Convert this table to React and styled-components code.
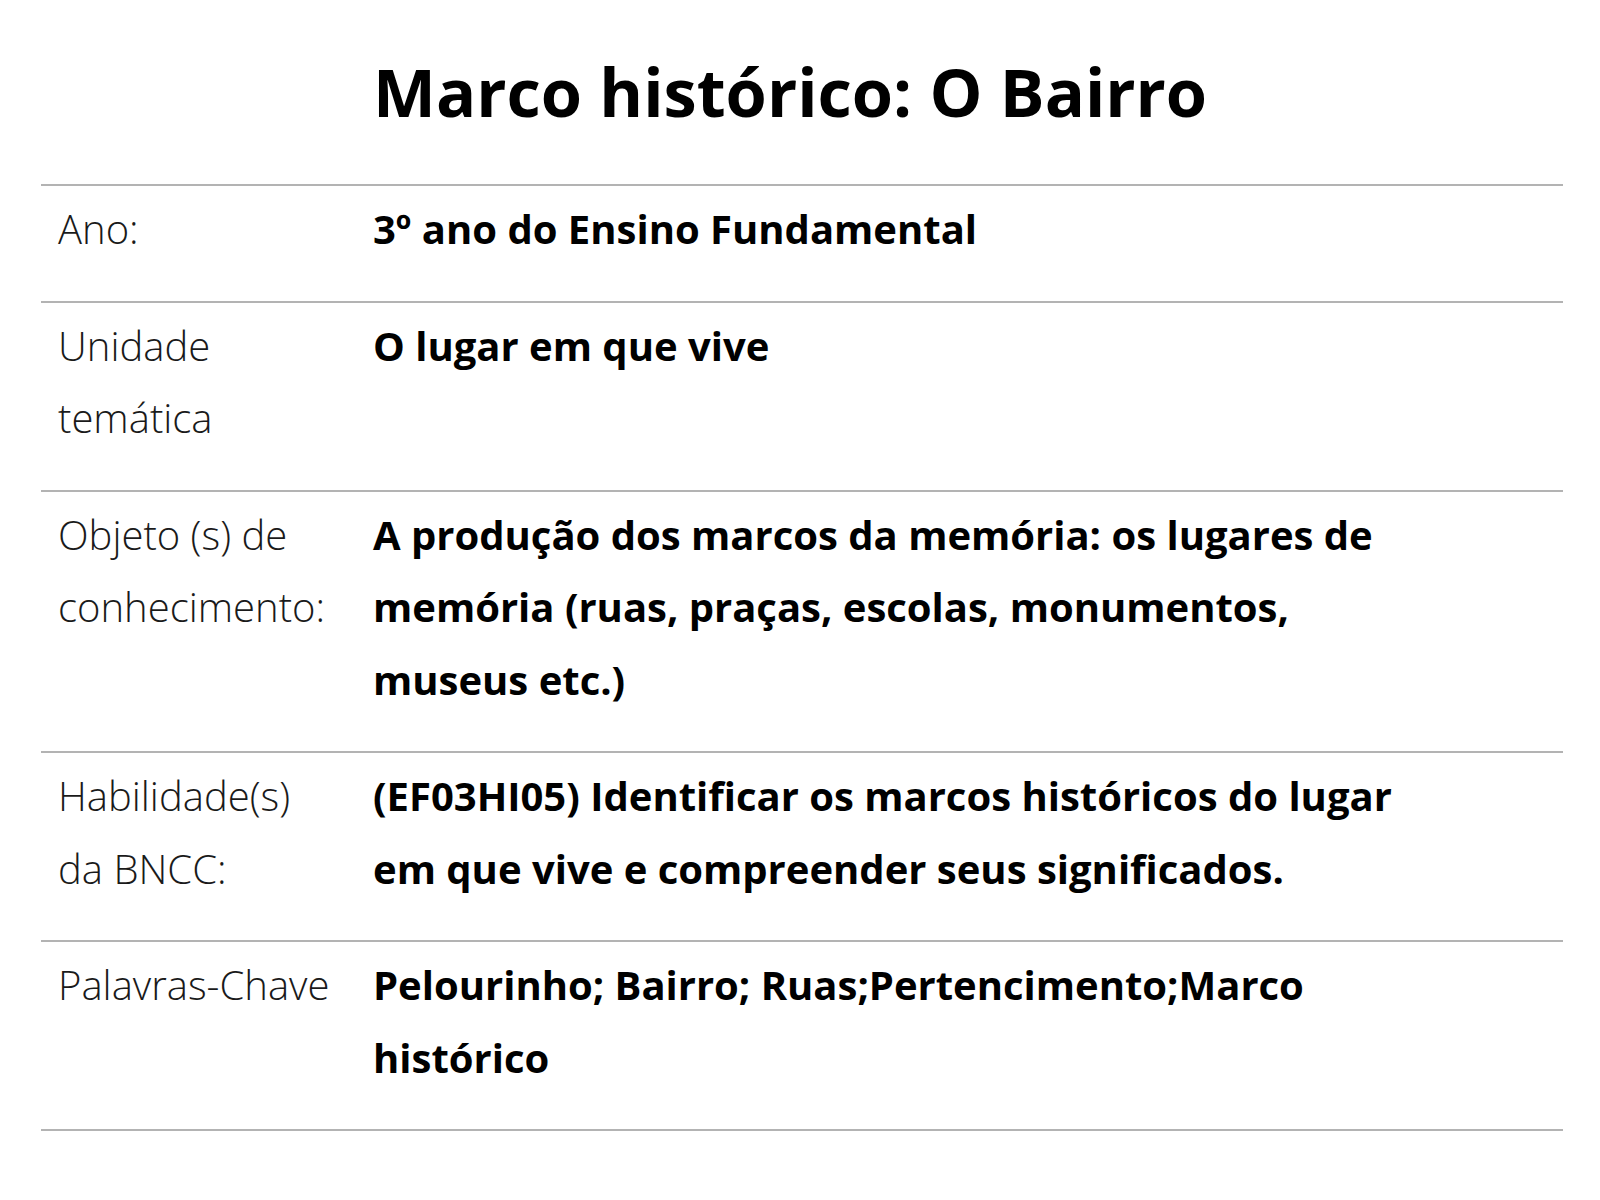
import React from 'react';
import styled, { createGlobalStyle } from "styled-components";

const GlobalStyle = createGlobalStyle`
  html, body {
    margin: 0;
    padding: 0;
    background: #ffffff;
  }
  body {
    font-family: "Open Sans", "Noto Sans", "Liberation Sans", sans-serif;
    color: #000;
  }
`;

// dados do plano de aula
const rows = [
  { label: "Ano:", value: "3º ano do Ensino Fundamental" },
  { label: "Unidade temática", value: "O lugar em que vive" },
  {
    label: "Objeto (s) de conhecimento:",
    value: "A produção dos marcos da memória: os lugares de memória (ruas, praças, escolas, monumentos, museus etc.)",
  },
  {
    label: "Habilidade(s) da BNCC:",
    value: "(EF03HI05) Identificar os marcos históricos do lugar em que vive e compreender seus significados.",
  },
  { label: "Palavras-Chave", value: "Pelourinho; Bairro; Ruas;Pertencimento;Marco histórico" },
];

const App = () => {
  return (
    <>
      <GlobalStyle />
      <Page>
        <Title>Marco histórico: O Bairro</Title>
        <Table>
          {rows.map((row, index) => (
            <Row key={index}>
              <Label>{row.label}</Label>
              <Value>{row.value}</Value>
            </Row>
          ))}
        </Table>
      </Page>
    </>
  );
};

export default App;

const Page = styled.div`
  width: 1600px;
  box-sizing: border-box;
  padding: 0 37px 60px 41px;
`;

const Title = styled.h1`
  margin: 0;
  padding: 52px 0 52px 332px;
  font-size: 66.7px;
  font-weight: 700;
  line-height: 1.2;
  color: #000;
`;

const Table = styled.div`
  display: flex;
  flex-direction: column;
  border-bottom: 2px solid #b3b3b3;
`;

const Row = styled.div`
  display: grid;
  grid-template-columns: 332px 1050px;
  border-top: 2px solid #b3b3b3;
  padding: 7px 0 35px;
`;

const Label = styled.div`
  padding-left: 17px;
  padding-right: 37px;
  font-size: 40px;
  font-weight: 300;
  line-height: 72.5px;
  color: #1a1a1a;
`;

const Value = styled.div`
  font-size: 40px;
  font-weight: 700;
  line-height: 72.5px;
  color: #000;
`;
